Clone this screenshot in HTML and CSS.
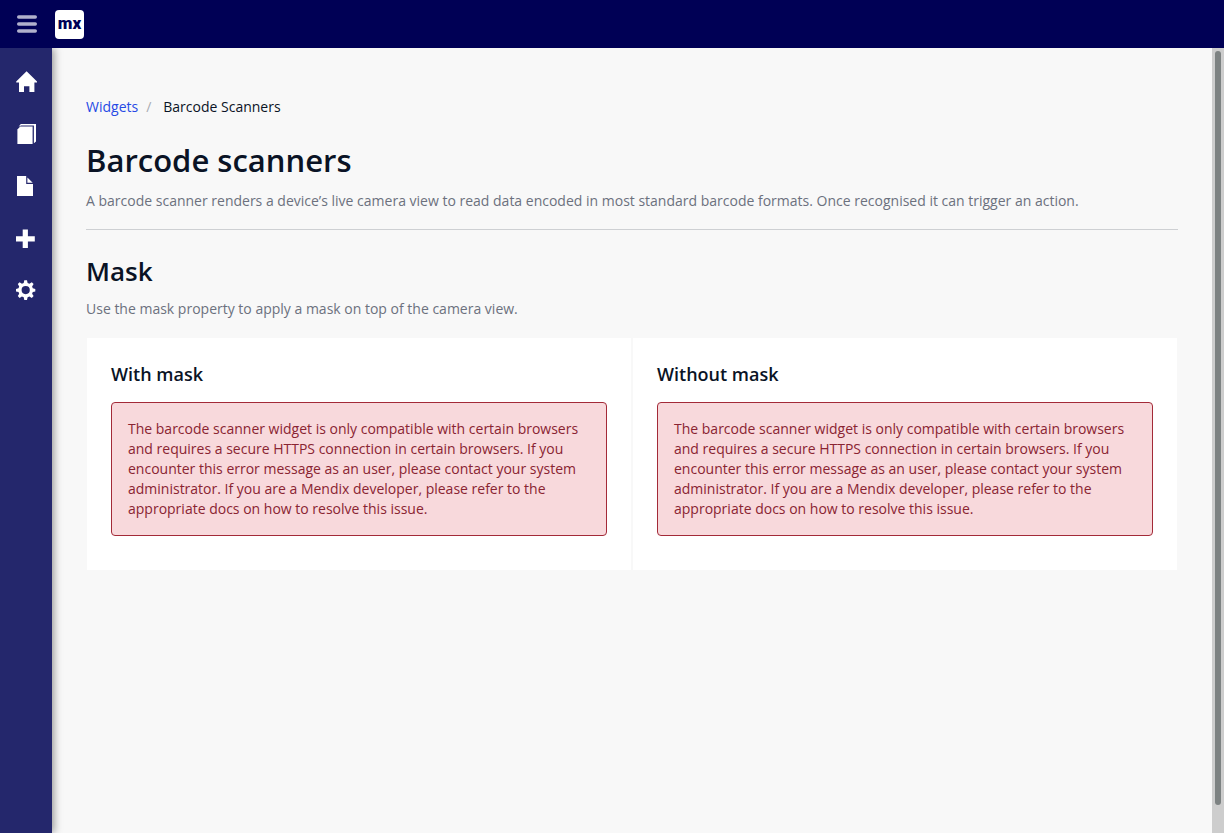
FILE: index.html
```html
<!DOCTYPE html>
<html lang="en">
<head>
  <meta charset="utf-8">
  <meta name="viewport" content="width=device-width, initial-scale=1">
  <title>Barcode Scanners</title>
  <link rel="stylesheet" href="styles.css">
</head>
<body>
  <header class="topbar">
    <button class="menu-toggle" type="button" aria-label="Toggle menu">
      <svg width="20" height="18" viewBox="0 0 20 18" fill="currentColor" aria-hidden="true">
        <rect width="20" height="3.4" rx="1.7" y="0.3"/>
        <rect width="20" height="3.4" rx="1.7" y="7.3"/>
        <rect width="20" height="3.4" rx="1.7" y="14.3"/>
      </svg>
    </button>
    <a class="logo" href="#">mx</a>
  </header>
  <div class="shell">
    <nav class="sidebar" aria-label="Main">
      <a class="nav-item" href="#" aria-label="Home">
        <svg class="nav-icon" viewBox="0 0 22 22" aria-hidden="true"><path d="M11.6 0.2 1.2 10.6V11.4H4V21H9V15.2H14.4V21H19.4V11.4H22V10.6Z"/></svg>
      </a>
      <a class="nav-item" href="#" aria-label="Templates">
        <svg class="nav-icon" viewBox="0 0 22 22" aria-hidden="true"><path d="M2.4 6.4 5.2 3.6H17.6V21H2.4Z"/><path d="M3.6 3.8 5.8 1H21V18.4L18.9 20.2V2.4H6Z"/></svg>
      </a>
      <a class="nav-item" href="#" aria-label="Pages">
        <svg class="nav-icon" viewBox="0 0 22 22" aria-hidden="true"><path d="M2 1H11.2V9H18V21H2Z"/><path d="M12.4 2.4V7.8H17.7Z"/></svg>
      </a>
      <a class="nav-item" href="#" aria-label="Widgets">
        <svg class="nav-icon" viewBox="0 0 22 22" aria-hidden="true"><path d="M7.7 2.5H12.9V9.2H19.8V14.4H12.9V21.1H7.7V14.4H1V9.2H7.7Z"/></svg>
      </a>
      <a class="nav-item" href="#" aria-label="Settings">
        <svg class="nav-icon" viewBox="0 0 22 22" aria-hidden="true"><path fill-rule="evenodd" d="M9.3 1.3H12L12.6 4 14.4 4.8 16.8 3.3 18.6 5.1 17.1 7.5 17.8 9.3 20.3 9.9V12.4L17.8 13 17.1 14.8 18.6 17 16.8 18.9 14.4 17.5 12.6 18.2 12 21H9.3L8.7 18.2 6.9 17.5 4.6 18.9 2.8 17 4.2 14.8 3.5 13 1 12.4V9.9L3.5 9.3 4.2 7.5 2.8 5.1 4.6 3.3 6.9 4.8 8.7 4ZM10.7 7A4.1 4.1 0 1 0 10.7 15.2 4.1 4.1 0 1 0 10.7 7Z"/></svg>
      </a>
    </nav>
    <main class="content">
      <nav aria-label="Breadcrumb">
        <ol class="breadcrumb">
          <li><a href="#">Widgets</a></li>
          <li class="separator" aria-hidden="true">/</li>
          <li aria-current="page">Barcode Scanners</li>
        </ol>
      </nav>
      <header class="page-header">
        <h1>Barcode scanners</h1>
        <p class="detail">A barcode scanner renders a device’s live camera view to read data encoded in most standard barcode formats. Once recognised it can trigger an action.</p>
      </header>
      <section>
        <h2>Mask</h2>
        <p class="detail">Use the mask property to apply a mask on top of the camera view.</p>
        <div class="cards">
          <article class="card">
            <h3>With mask</h3>
            <div class="alert" role="alert">The barcode scanner widget is only compatible with certain browsers and requires a secure HTTPS connection in certain browsers. If you encounter this error message as an user, please contact your system administrator. If you are a Mendix developer, please refer to the appropriate docs on how to resolve this issue.</div>
          </article>
          <article class="card">
            <h3>Without mask</h3>
            <div class="alert" role="alert">The barcode scanner widget is only compatible with certain browsers and requires a secure HTTPS connection in certain browsers. If you encounter this error message as an user, please contact your system administrator. If you are a Mendix developer, please refer to the appropriate docs on how to resolve this issue.</div>
          </article>
        </div>
      </section>
    </main>
    <div class="scroll-track" aria-hidden="true"><div class="scroll-thumb"></div></div>
  </div>
</body>
</html>
```
FILE: styles.css
```css
* {
  box-sizing: border-box;
}

body {
  margin: 0;
  min-height: 100vh;
  display: flex;
  flex-direction: column;
  background: #f8f8f8;
  color: #0a1325;
  font: 14px/20px "Open Sans", sans-serif;
}

h1,
h2,
h3,
p {
  margin: 0;
  font-weight: 600;
}

.topbar {
  display: flex;
  align-items: center;
  gap: 12px;
  height: 48px;
  padding: 0 11px;
  background: #000055;
}

.menu-toggle {
  display: grid;
  place-items: center;
  width: 32px;
  height: 32px;
  padding: 0;
  border: 0;
  background: none;
  color: #b0b0cc;
}

.logo {
  display: grid;
  place-items: center;
  width: 29px;
  height: 29px;
  padding-bottom: 3px;
  border-radius: 4px;
  background: #fff;
  color: #000055;
  font: 900 17px/24px Roboto, sans-serif;
  text-decoration: none;
}

.shell {
  flex: 1;
  display: flex;
}

.sidebar {
  flex: none;
  width: 52px;
  padding-top: 8px;
  background: #24276c;
  box-shadow: 2px 0 8px rgba(0, 0, 0, 0.4);
  clip-path: inset(0 -16px 0 0);
}

.nav-item {
  display: flex;
  align-items: center;
  height: 52px;
  padding-left: 15px;
  color: #fff;
}

.nav-icon {
  width: 22px;
  height: 22px;
  fill: currentColor;
}

.content {
  flex: 1;
  min-width: 0;
  padding: 49px 34px 32px;
}

.breadcrumb {
  display: flex;
  margin: 0;
  padding: 0;
  list-style: none;
}

.breadcrumb a {
  color: #264ae5;
  text-decoration: none;
}

.separator {
  padding: 0 12px 0 8px;
  color: #a9acb3;
}

.page-header {
  margin-bottom: 24px;
  padding: 24px 0 18px;
  border-bottom: 1px solid #ced0d3;
}

h1 {
  margin-bottom: 12px;
  font-size: 31px;
  line-height: 38px;
}

h2 {
  margin-bottom: 10px;
  font-size: 26px;
  line-height: 35px;
}

h3 {
  margin-bottom: 15px;
  font-size: 18px;
  line-height: 25px;
}

.detail {
  color: #6c717e;
  font-weight: 400;
}

.cards {
  display: grid;
  grid-template-columns: repeat(2, minmax(0, 1fr));
  margin-top: 18px;
}

.card {
  padding: 24px 24px 34px;
  border: 1px solid #f8f8f8;
  background: #fff;
}

.alert {
  padding: 16px;
  border: 1px solid #a32a38;
  border-radius: 4px;
  background: #f8d9dc;
  color: #8a2432;
}

.scroll-track {
  flex: none;
  width: 12px;
  padding: 3px 3px 28px;
  background: #cdcdcd;
}

.scroll-thumb {
  height: 100%;
  border-radius: 3px;
  background: #7d8282;
}
```
